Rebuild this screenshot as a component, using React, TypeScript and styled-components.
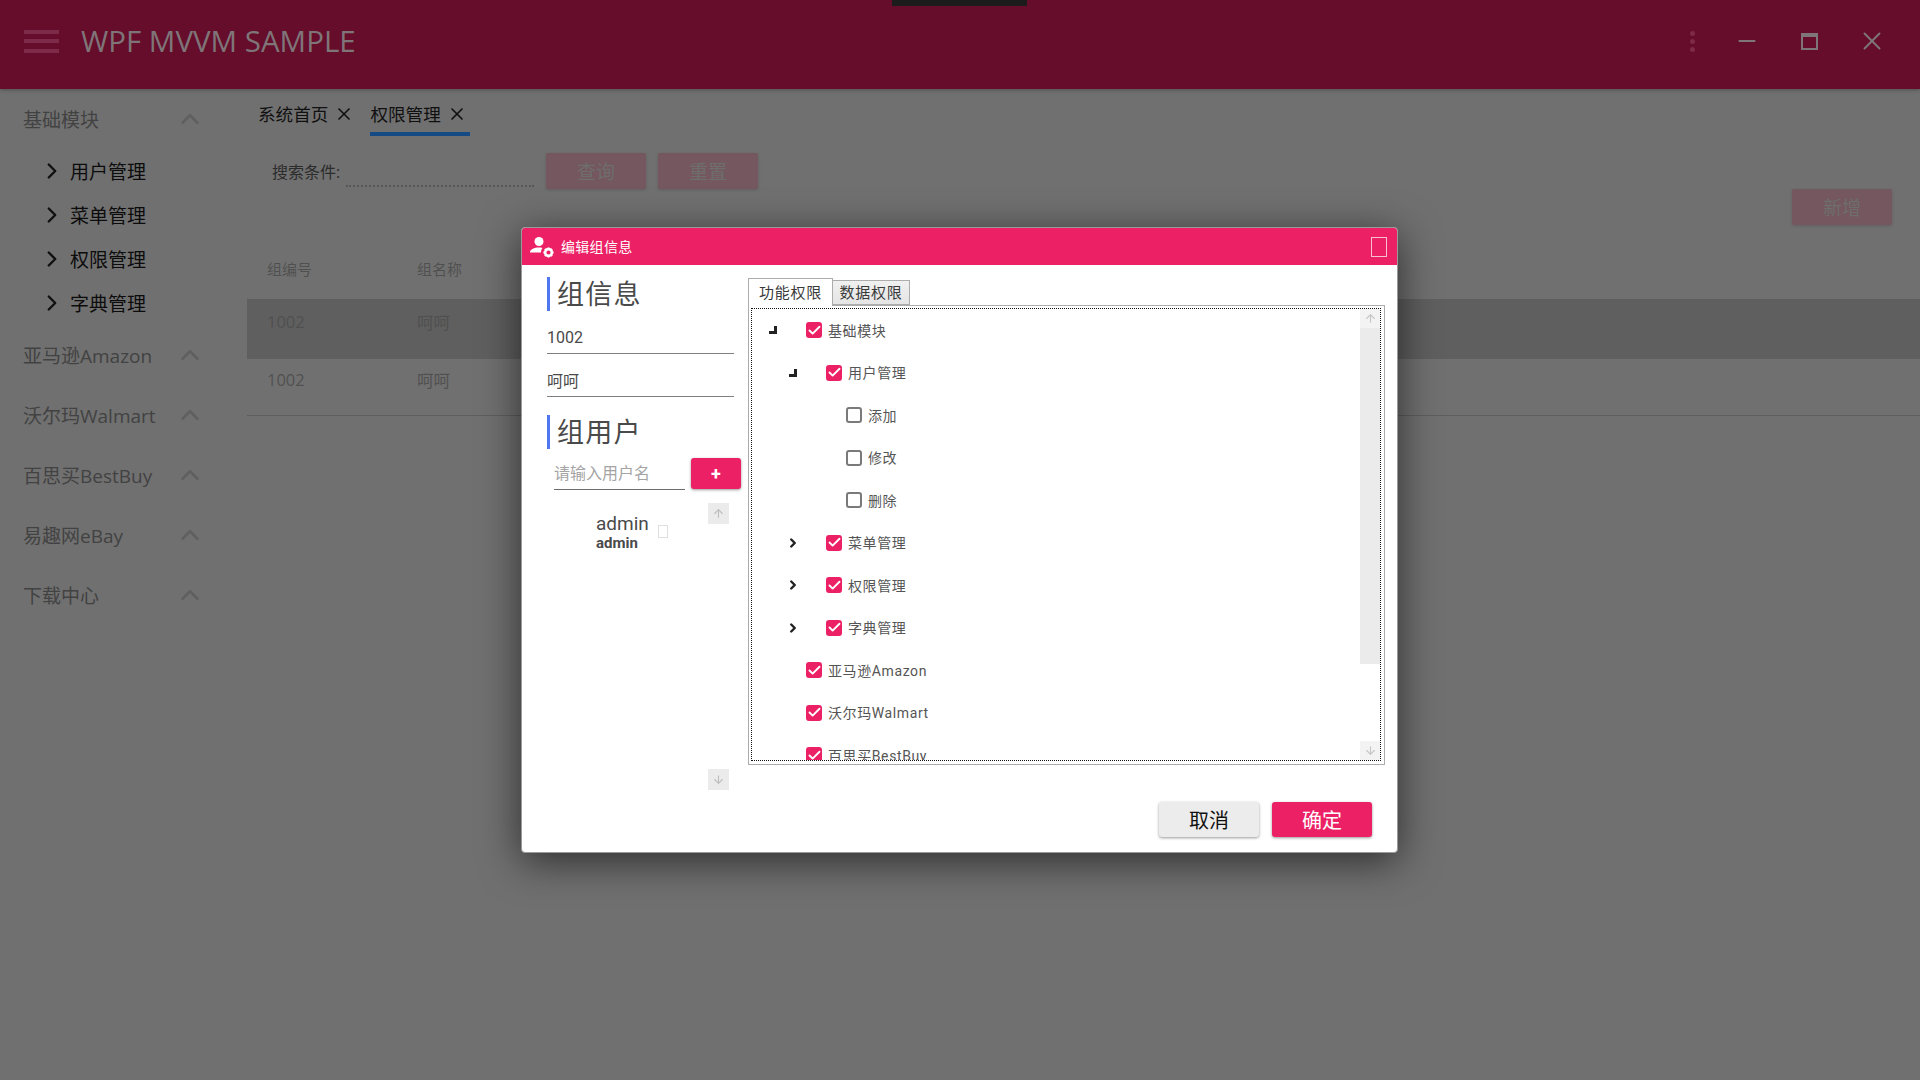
import { createGlobalStyle, styled } from 'styled-components';
import { ChevronRight, ChevronUp, ArrowUp, ArrowDown, X, Minus, Check } from 'lucide-react';

const PINK = '#ec2165';
const FONT = `Roboto, "Noto Sans CJK SC", sans-serif`;
const SHELL_FONT = `"Open Sans", "Noto Sans CJK SC", sans-serif`;

type TreeItem = {
  label: string;
  level: number;
  checked: boolean;
  toggle?: 'open' | 'closed';
};

const TREE: TreeItem[] = [
  { label: '基础模块', level: 0, checked: true, toggle: 'open' },
  { label: '用户管理', level: 1, checked: true, toggle: 'open' },
  { label: '添加', level: 2, checked: false },
  { label: '修改', level: 2, checked: false },
  { label: '删除', level: 2, checked: false },
  { label: '菜单管理', level: 1, checked: true, toggle: 'closed' },
  { label: '权限管理', level: 1, checked: true, toggle: 'closed' },
  { label: '字典管理', level: 1, checked: true, toggle: 'closed' },
  { label: '亚马逊Amazon', level: 0, checked: true },
  { label: '沃尔玛Walmart', level: 0, checked: true },
  { label: '百思买BestBuy', level: 0, checked: true },
];

const MENU = ['用户管理', '菜单管理', '权限管理', '字典管理'];
const MODULES = ['亚马逊Amazon', '沃尔玛Walmart', '百思买BestBuy', '易趣网eBay', '下载中心'];

export default function App() {
  return (
    <>
      <GlobalStyle />
      <Page>
        <AppBar>
          <TopNotch />
          <Hamburger>
            <i />
            <i />
            <i />
          </Hamburger>
          <AppTitle>WPF MVVM SAMPLE</AppTitle>
          <WindowControls>
            <Dots>
              <i />
              <i />
              <i />
            </Dots>
            <WindowButton>
              <Minus size={26} strokeWidth={1.8} />
            </WindowButton>
            <WindowButton>
              <MaxIcon />
            </WindowButton>
            <WindowButton>
              <X size={30} strokeWidth={1.5} />
            </WindowButton>
          </WindowControls>
        </AppBar>
        <Body>
          <Sidebar>
            <ModuleRow>
              基础模块
              <ChevronUp size={30} strokeWidth={2} color="#5f5f5f" />
            </ModuleRow>
            {MENU.map((name) => (
              <MenuRow key={name}>
                <ChevronRight size={26} strokeWidth={2.2} color="#101010" />
                {name}
              </MenuRow>
            ))}
            {MODULES.map((name) => (
              <ModuleRow key={name}>
                {name}
                <ChevronUp size={30} strokeWidth={2} color="#5f5f5f" />
              </ModuleRow>
            ))}
          </Sidebar>
          <Main>
            <Tabs>
              <PageTab>
                系统首页
                <X size={20} strokeWidth={2} />
              </PageTab>
              <PageTab $active>
                权限管理
                <X size={20} strokeWidth={2} />
              </PageTab>
            </Tabs>
            <SearchRow>
              <SearchLabel>搜索条件:</SearchLabel>
              <SearchInput />
              <FadedButton>查询</FadedButton>
              <FadedButton>重置</FadedButton>
            </SearchRow>
            <AddRow>
              <FadedButton>新增</FadedButton>
            </AddRow>
            <TableHead>
              <Cell>组编号</Cell>
              <Cell>组名称</Cell>
            </TableHead>
            <TableRow $selected>
              <Cell>1002</Cell>
              <Cell>呵呵</Cell>
            </TableRow>
            <TableRow>
              <Cell>1002</Cell>
              <Cell>呵呵</Cell>
            </TableRow>
          </Main>
        </Body>
        <Dialog>
          <DialogBar>
            <UserGearIcon />
            <DialogTitle>编辑组信息</DialogTitle>
            <MissingGlyph />
          </DialogBar>
          <DialogBody>
            <LeftColumn>
              <SectionTitle>组信息</SectionTitle>
              <UnderlineField>1002</UnderlineField>
              <UnderlineField>呵呵</UnderlineField>
              <SectionTitle $second>组用户</SectionTitle>
              <UserSearch>
                <UserInput>请输入用户名</UserInput>
                <PlusButton>+</PlusButton>
              </UserSearch>
              <UserList>
                <UserEntry>
                  <UserNames>
                    <UserName>admin</UserName>
                    <UserAccount>admin</UserAccount>
                  </UserNames>
                  <UserBox />
                </UserEntry>
                <ListScroll>
                  <ScrollButton>
                    <ArrowUp size={13} strokeWidth={2} />
                  </ScrollButton>
                  <ScrollButton>
                    <ArrowDown size={13} strokeWidth={2} />
                  </ScrollButton>
                </ListScroll>
              </UserList>
            </LeftColumn>
            <RightColumn>
              <TabStrip>
                <PermTab $active>功能权限</PermTab>
                <PermTab>数据权限</PermTab>
              </TabStrip>
              <TabPanel>
                <TreeFrame>
                  <TreeList>
                    {TREE.map((item) => (
                      <TreeRow key={item.label} $level={item.level}>
                        <Toggle>
                          {item.toggle === 'open' && <OpenMark />}
                          {item.toggle === 'closed' && (
                            <ChevronRight size={22} strokeWidth={4.2} color="#222" />
                          )}
                        </Toggle>
                        <CheckBox $checked={item.checked}>
                          {item.checked && <Check size={15} strokeWidth={3} color="#fff" />}
                        </CheckBox>
                        <TreeLabel>{item.label}</TreeLabel>
                      </TreeRow>
                    ))}
                  </TreeList>
                  <TreeScrollbar>
                    <TreeScrollButton>
                      <ArrowUp size={13} strokeWidth={2} />
                    </TreeScrollButton>
                    <TreeThumb />
                    <TreeScrollButton>
                      <ArrowDown size={13} strokeWidth={2} />
                    </TreeScrollButton>
                  </TreeScrollbar>
                </TreeFrame>
              </TabPanel>
            </RightColumn>
          </DialogBody>
          <DialogFooter>
            <FooterButton>取消</FooterButton>
            <FooterButton $primary>确定</FooterButton>
          </DialogFooter>
        </Dialog>
      </Page>
    </>
  );
}

const MaxIcon = () => (
  <svg width="17" height="17" viewBox="0 0 17 17">
    <rect x="1" y="1" width="15" height="15" fill="none" stroke="currentColor" strokeWidth="2" />
    <rect x="0" y="0" width="17" height="4" fill="currentColor" />
  </svg>
);

const UserGearIcon = () => (
  <svg width="24" height="24" viewBox="0 0 24 24" fill="#fff">
    <circle cx="9" cy="6.5" r="4.5" />
    <path d="M0 17.5c0-3.2 4.5-5 9-5 1.2 0 2.4.1 3.4.4-.9 1.2-1.4 2.6-1.4 4.6H0z" />
    <circle cx="18.5" cy="17.5" r="3.4" fill="none" stroke="#fff" strokeWidth="2.6" />
    <g stroke="#fff" strokeWidth="1.9">
      <path d="M18.5 12.4v2M18.5 20.6v2M13.4 17.5h2M21.6 17.5h2M14.9 13.9l1.4 1.4M20.7 19.7l1.4 1.4M14.9 21.1l1.4-1.4M20.7 15.3l1.4-1.4" />
    </g>
  </svg>
);

const GlobalStyle = createGlobalStyle`
  html, body {
    margin: 0;
    height: 100%;
    overflow: hidden;
    background: #707070;
  }
  * {
    box-sizing: border-box;
  }
`;

const Page = styled.div`
  position: relative;
  display: flex;
  flex-direction: column;
  width: 1920px;
  height: 1080px;
  background: #707070;
  font-family: ${SHELL_FONT};
`;

const AppBar = styled.header`
  position: relative;
  display: flex;
  align-items: center;
  flex: none;
  height: 89px;
  padding: 0 24px;
  background: #650d2b;
  box-shadow: 0 1px 4px rgba(0, 0, 0, 0.3);
`;

const TopNotch = styled.div`
  position: absolute;
  top: 0;
  left: 892px;
  width: 135px;
  height: 6px;
  background: #1c1c1c;
`;

const Hamburger = styled.div`
  display: flex;
  flex-direction: column;
  justify-content: space-between;
  width: 35px;
  height: 23px;
  margin-bottom: 7px;

  i {
    display: block;
    height: 4px;
    background: #7d2b48;
  }
`;

const AppTitle = styled.div`
  margin-left: 22px;
  margin-bottom: 8px;
  font-size: 29.5px;
  color: #7f7579;
`;

const WindowControls = styled.div`
  display: flex;
  align-items: center;
  margin-left: auto;
  margin-right: -7px;
  margin-bottom: 7px;
  color: #7f7579;
`;

const Dots = styled.div`
  display: flex;
  flex-direction: column;
  gap: 3px;
  margin-right: 21px;

  i {
    display: block;
    width: 5px;
    height: 5px;
    border-radius: 50%;
    background: #7d2b48;
  }
`;

const WindowButton = styled.div`
  display: flex;
  align-items: center;
  justify-content: center;
  width: 62.5px;
`;

const Body = styled.div`
  display: flex;
  flex: 1;
  min-height: 0;
`;

const Sidebar = styled.aside`
  display: flex;
  flex-direction: column;
  flex: none;
  width: 247px;
  padding: 0 42px 0 23px;
`;

const ModuleRow = styled.div`
  display: flex;
  align-items: center;
  justify-content: space-between;
  height: 60px;
  font-size: 19px;
  color: #424242;
`;

const MenuRow = styled.div`
  display: flex;
  align-items: center;
  gap: 5px;
  height: 43.9px;
  padding-left: 16px;
  font-size: 19px;
  color: #0c0c0c;
`;

const Main = styled.main`
  display: flex;
  flex-direction: column;
  flex: 1;
  min-width: 0;
`;

const Tabs = styled.div`
  display: flex;
  gap: 16px;
  height: 47px;
  padding: 10px 0 0 11px;
`;

const PageTab = styled.div<{ $active?: boolean }>`
  display: flex;
  align-items: flex-start;
  gap: 6px;
  height: 37px;
  width: ${({ $active }) => ($active ? '100px' : 'auto')};
  padding-top: 3px;
  font-size: 17.6px;
  line-height: 24px;
  color: #101010;
  border-bottom: 4px solid ${({ $active }) => ($active ? '#154b85' : 'transparent')};

  svg {
    margin-top: 2px;
  }
`;

const SearchRow = styled.div`
  display: flex;
  align-items: center;
  height: 36px;
  margin-top: 17px;
  padding-left: 25px;
`;

const SearchLabel = styled.div`
  width: 74px;
  font-size: 16px;
  color: #2c2c2c;
`;

const SearchInput = styled.div`
  align-self: flex-end;
  width: 188px;
  height: 2px;
  margin-right: 12px;
  margin-bottom: 2px;
  border-bottom: 2px dotted #575757;
`;

const FadedButton = styled.div`
  display: flex;
  align-items: center;
  justify-content: center;
  width: 100px;
  height: 36px;
  margin-right: 12px;
  border-radius: 2px;
  background: #74575f;
  box-shadow: 0 1px 3px rgba(0, 0, 0, 0.15);
  font-size: 19px;
  color: #6e6e6e;
`;

const AddRow = styled.div`
  display: flex;
  justify-content: flex-end;
  padding-right: 16px;
`;

const TableHead = styled.div`
  display: flex;
  align-items: center;
  height: 74px;
  padding-top: 13px;
  color: #505050;
  font-size: 15px;
`;

const TableRow = styled.div<{ $selected?: boolean }>`
  display: flex;
  align-items: center;
  height: ${({ $selected }) => ($selected ? '60px' : '57px')};
  padding-bottom: ${({ $selected }) => ($selected ? '14px' : '15px')};
  font-size: 16.5px;
  color: #505050;
  background: ${({ $selected }) => ($selected ? '#5f5f5f' : 'transparent')};
  border-bottom: 1px solid ${({ $selected }) => ($selected ? 'transparent' : '#5e5e5e')};
`;

const Cell = styled.div`
  flex: none;
  width: 150px;
  padding-left: 20px;
`;

const Dialog = styled.section`
  position: absolute;
  top: 227px;
  left: 521px;
  display: flex;
  flex-direction: column;
  width: 877px;
  height: 626px;
  border: 1px solid #9a9a9a;
  border-radius: 4px;
  background: #fff;
  box-shadow: 0 8px 40px rgba(0, 0, 0, 0.6);
  font-family: ${FONT};
  overflow: hidden;
`;

const DialogBar = styled.div`
  display: flex;
  align-items: center;
  flex: none;
  height: 37px;
  padding: 0 10px 0 8px;
  background: ${PINK};
`;

const DialogTitle = styled.div`
  margin-left: 7px;
  margin-bottom: 1px;
  font-size: 14px;
  letter-spacing: 0.3px;
  color: #fff;
`;

const MissingGlyph = styled.div`
  width: 16px;
  height: 20px;
  margin-left: auto;
  border: 1px solid #f6bfd2;
`;

const DialogBody = styled.div`
  display: flex;
  flex: none;
  height: 530px;
  padding: 0 0 0 25px;
`;

const LeftColumn = styled.div`
  display: flex;
  flex-direction: column;
  flex: none;
  width: 201px;
`;

const SectionTitle = styled.div<{ $second?: boolean }>`
  display: flex;
  align-items: center;
  flex: none;
  height: 34px;
  margin-top: ${({ $second }) => ($second ? '18px' : '12px')};
  padding: 0 0 4px 7px;
  border-left: 3px solid #4f78f0;
  font-size: 27px;
  letter-spacing: 1.2px;
  color: #4a4a4a;
`;

const UnderlineField = styled.div`
  display: flex;
  align-items: center;
  flex: none;
  width: 187px;
  height: 35px;
  margin-top: 8px;
  padding-top: 2px;
  border-bottom: 1px solid #7f7f7f;
  font-size: 16px;
  color: #4a4a4a;
`;

const UserSearch = styled.div`
  display: flex;
  align-items: center;
  gap: 6px;
  flex: none;
  margin-top: 7px;
  padding-left: 7px;
`;

const UserInput = styled.div`
  display: flex;
  align-items: center;
  width: 131px;
  height: 34px;
  padding-bottom: 2px;
  border-bottom: 1px solid #6d6d6d;
  font-size: 16px;
  color: #a4a4a4;
`;

const PlusButton = styled.div`
  display: flex;
  align-items: center;
  justify-content: center;
  flex: none;
  width: 50px;
  height: 31px;
  border-radius: 3px;
  background: ${PINK};
  box-shadow: 0 1px 3px rgba(0, 0, 0, 0.4);
  font-size: 18px;
  font-weight: 700;
  color: #fff;
`;

const UserList = styled.div`
  display: flex;
  flex: none;
  height: 287px;
  margin-top: 13px;
`;

const UserEntry = styled.div`
  display: flex;
  align-items: center;
  align-self: flex-start;
  gap: 9px;
  margin-left: 49px;
  margin-top: 9px;
`;

const UserNames = styled.div`
  display: flex;
  flex-direction: column;
`;

const UserName = styled.div`
  font-size: 19px;
  line-height: 23px;
  color: #4a4a4a;
`;

const UserAccount = styled.div`
  font-size: 15px;
  line-height: 16px;
  font-weight: 700;
  color: #4a4a4a;
`;

const UserBox = styled.div`
  width: 10px;
  height: 13px;
  border: 1px solid #dfdfdf;
`;

const ListScroll = styled.div`
  display: flex;
  flex-direction: column;
  justify-content: space-between;
  margin-left: auto;
  margin-right: 19px;
`;

const ScrollButton = styled.div`
  display: flex;
  align-items: center;
  justify-content: center;
  width: 21px;
  height: 21px;
  background: #ebebeb;
  color: #bdbdbd;
`;

const RightColumn = styled.div`
  display: flex;
  flex-direction: column;
  flex: none;
  width: 637px;
  padding-top: 13px;
`;

const TabStrip = styled.div`
  display: flex;
  align-items: flex-end;
  flex: none;
  height: 27px;
`;

const PermTab = styled.div<{ $active?: boolean }>`
  display: flex;
  align-items: center;
  justify-content: center;
  width: ${({ $active }) => ($active ? '85px' : '77px')};
  height: ${({ $active }) => ($active ? '28px' : '25px')};
  margin-bottom: ${({ $active }) => ($active ? '-1px' : '0')};
  padding-bottom: 3px;
  border: 1px solid #acacac;
  border-left-width: ${({ $active }) => ($active ? '1px' : '0')};
  border-bottom-width: ${({ $active }) => ($active ? '0' : '1px')};
  background: ${({ $active }) => ($active ? '#fff' : 'linear-gradient(#f0f0f0, #e5e5e5)')};
  font-size: 15px;
  letter-spacing: 0.7px;
  color: #3a3a3a;
  z-index: ${({ $active }) => ($active ? 1 : 0)};
`;

const TabPanel = styled.div`
  flex: none;
  height: 460px;
  border: 1px solid #acacac;
  padding: 2px 3px 3px 2px;
`;

const TreeFrame = styled.div`
  display: flex;
  height: 100%;
  border: 1px dotted #111;
  overflow: hidden;
`;

const TreeList = styled.div`
  flex: 1;
  min-width: 0;
  overflow: hidden;
`;

const TreeRow = styled.div<{ $level: number }>`
  display: flex;
  align-items: center;
  height: 42.5px;
  padding-left: ${({ $level }) => 14 + $level * 20}px;
`;

const Toggle = styled.div`
  display: flex;
  align-items: center;
  justify-content: center;
  flex: none;
  width: 14px;
  height: 14px;
  margin-right: 26px;
`;

const OpenMark = styled.div`
  width: 8px;
  height: 8px;
  border-right: 3px solid #222;
  border-bottom: 3px solid #222;
`;

const CheckBox = styled.div<{ $checked: boolean }>`
  display: flex;
  align-items: center;
  justify-content: center;
  flex: none;
  width: 16px;
  height: 16px;
  border-radius: 3px;
  background: ${({ $checked }) => ($checked ? PINK : '#fff')};
  border: ${({ $checked }) => ($checked ? 'none' : '2px solid #7a7a7a')};
`;

const TreeLabel = styled.div`
  margin-left: 6px;
  margin-bottom: 1px;
  font-size: 14px;
  letter-spacing: 0.6px;
  color: #555;
  white-space: nowrap;
`;

const TreeScrollbar = styled.div`
  display: flex;
  flex-direction: column;
  flex: none;
  width: 20px;
`;

const TreeScrollButton = styled.div`
  display: flex;
  align-items: center;
  justify-content: center;
  flex: none;
  height: 19px;
  background: #f3f3f3;
  color: #c4c4c4;
`;

const TreeThumb = styled.div`
  flex: none;
  height: 336px;
  margin-bottom: auto;
  background: #ebebeb;
`;

const DialogFooter = styled.div`
  display: flex;
  align-items: flex-start;
  justify-content: flex-end;
  gap: 13px;
  flex: 1;
  padding: 7px 25px 0 0;
`;

const FooterButton = styled.div<{ $primary?: boolean }>`
  display: flex;
  align-items: center;
  justify-content: center;
  width: 100px;
  height: 35px;
  border-radius: 3px;
  background: ${({ $primary }) => ($primary ? PINK : '#ececec')};
  box-shadow: 0 1px 3px rgba(0, 0, 0, 0.4);
  font-size: 20px;
  color: ${({ $primary }) => ($primary ? '#fff' : '#111')};
`;
